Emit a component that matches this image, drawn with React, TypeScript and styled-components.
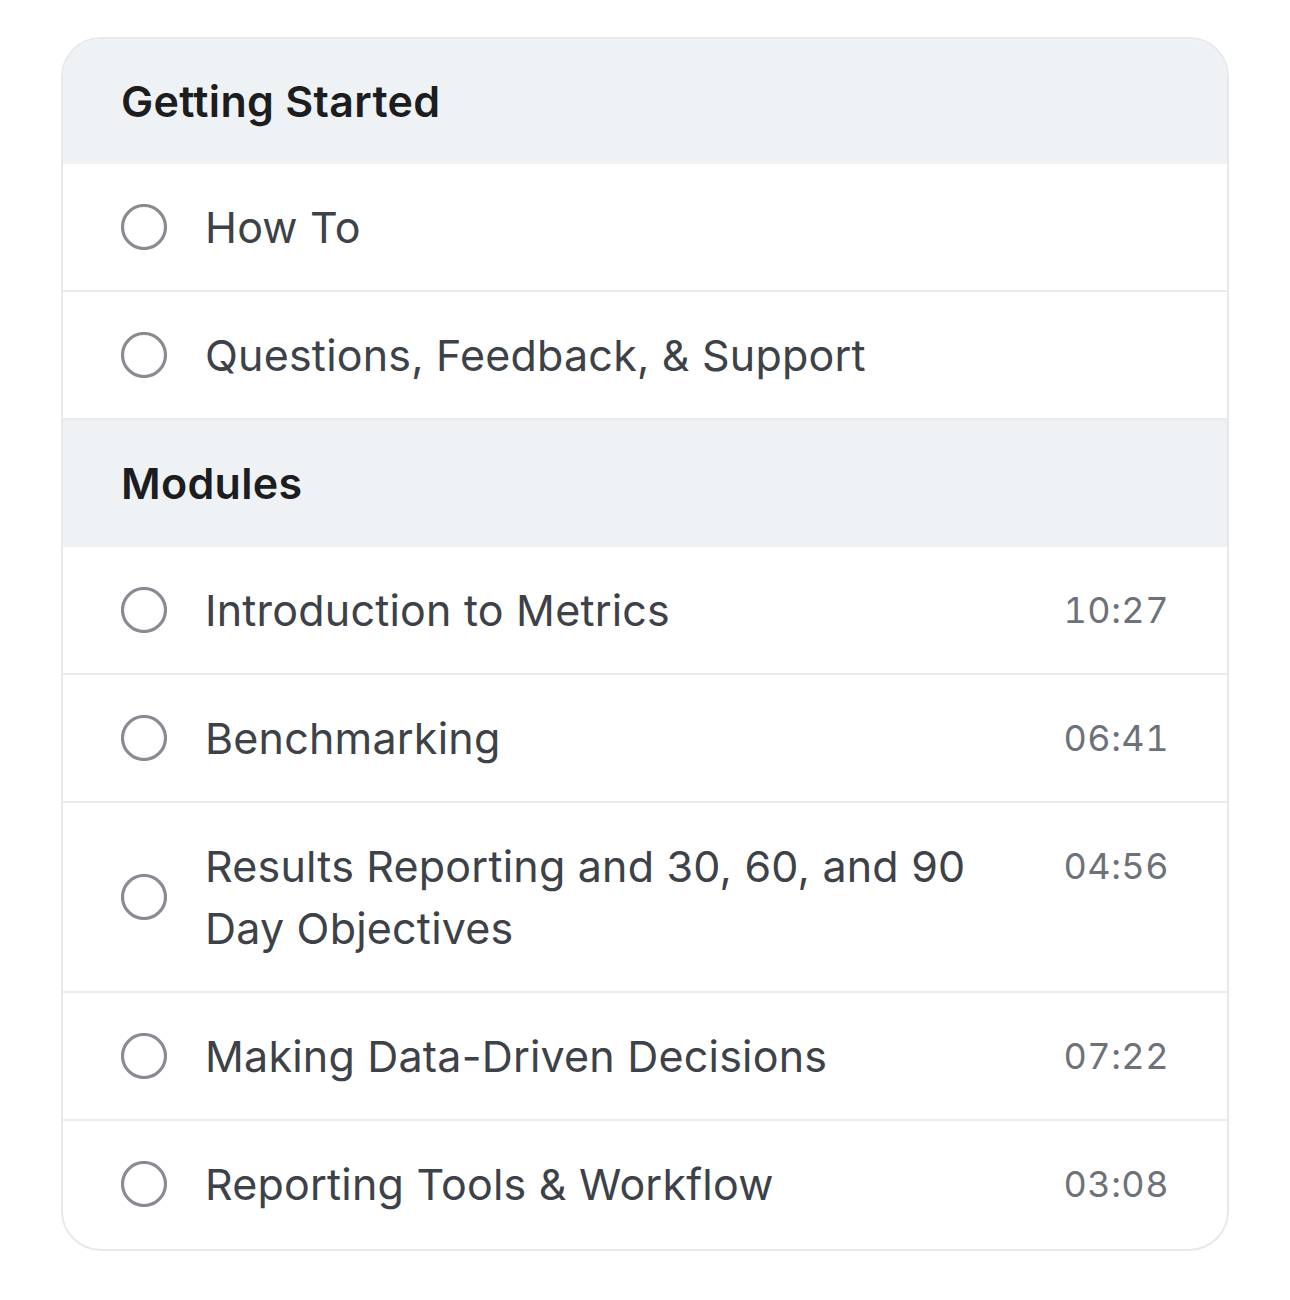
import React from "react";
import styled, { createGlobalStyle } from "styled-components";

interface Lesson {
  title: string;
  duration?: string;
}

interface Section {
  title: string;
  lessons: Lesson[];
}

const sections: Section[] = [
  {
    title: "Getting Started",
    lessons: [{ title: "How To" }, { title: "Questions, Feedback, & Support" }],
  },
  {
    title: "Modules",
    lessons: [
      { title: "Introduction to Metrics", duration: "10:27" },
      { title: "Benchmarking", duration: "06:41" },
      { title: "Results Reporting and 30, 60, and 90 Day Objectives", duration: "04:56" },
      { title: "Making Data-Driven Decisions", duration: "07:22" },
      { title: "Reporting Tools & Workflow", duration: "03:08" },
    ],
  },
];

const GlobalStyle = createGlobalStyle`
  body {
    margin: 0;
    background: #ffffff;
    font-family: Inter, "Noto Sans", "Liberation Sans", sans-serif;
    -webkit-font-smoothing: antialiased;
  }
`;

const Page = styled.div`
  padding: 37px 61px 40px 61px;
`;

const Card = styled.div`
  width: 1168px;
  box-sizing: border-box;
  border: 2px solid #e6e8ec;
  border-radius: 40px;
  overflow: hidden;
  background: #ffffff;
`;

const SectionHeader = styled.div<{ $first?: boolean }>`
  background: #eff2f5;
  padding: ${(p) => (p.$first ? "32px 58px 33px" : "33px 58px 34px")};
  font-size: 43px;
  line-height: 60px;
  font-weight: 600;
  color: #1b1d21;
  letter-spacing: 0.3px;
`;

const Row = styled.div<{ $last?: boolean }>`
  display: grid;
  grid-template-columns: 46px 1fr auto;
  column-gap: 38px;
  align-items: start;
  padding: ${(p) => (p.$last ? "32px 58px 34px" : "32px 58px")};
  border-bottom: ${(p) => (p.$last ? "none" : "2px solid #e8eaee")};
`;

const CircleWrap = styled.div`
  align-self: center;
  width: 46px;
  height: 46px;
`;

const Title = styled.div`
  font-size: 43px;
  line-height: 62px;
  color: #3d4148;
  letter-spacing: 0.2px;
  max-width: 790px;
`;

const Duration = styled.div`
  font-size: 36px;
  line-height: 62px;
  color: #6d7179;
  font-variant-numeric: tabular-nums;
  letter-spacing: 0.5px;
`;

const Circle = () => (
  <CircleWrap>
    <svg width="46" height="46" viewBox="0 0 46 46">
      <circle cx="23" cy="23" r="21.5" fill="none" stroke="#8a8b92" strokeWidth="3.2" />
    </svg>
  </CircleWrap>
);

const App: React.FC = () => {
  return (
    <Page>
      <GlobalStyle />
      <Card>
        {sections.map((section, si) => (
          <div key={section.title}>
            <SectionHeader $first={si === 0}>{section.title}</SectionHeader>
            {section.lessons.map((lesson, li) => (
              <Row
                key={lesson.title}
                $last={si === sections.length - 1 && li === section.lessons.length - 1}
              >
                <Circle />
                <Title>{lesson.title}</Title>
                <Duration>{lesson.duration}</Duration>
              </Row>
            ))}
          </div>
        ))}
      </Card>
    </Page>
  );
};

export default App;
